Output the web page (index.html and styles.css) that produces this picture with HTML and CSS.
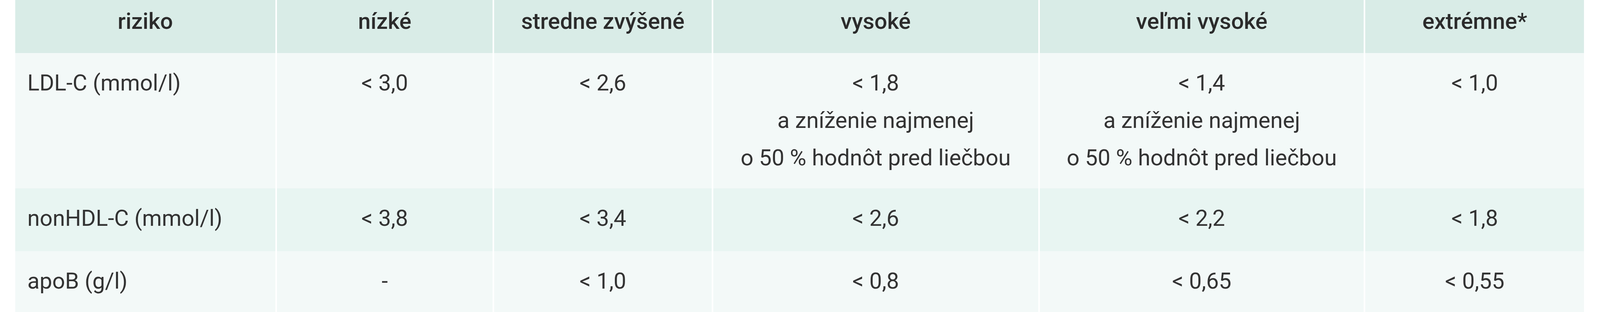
FILE: index.html
```html
<!DOCTYPE html>
<html lang="sk">
<head>
<meta charset="utf-8">
<title>Cieľové hodnoty</title>
<link rel="stylesheet" href="styles.css">
</head>
<body>
<table class="targets">
  <colgroup>
    <col class="c1"><col class="c2"><col class="c3"><col class="c4"><col class="c5"><col class="c6">
  </colgroup>
  <thead>
    <tr>
      <th>riziko</th>
      <th>nízké</th>
      <th>stredne zvýšené</th>
      <th>vysoké</th>
      <th>veľmi vysoké</th>
      <th>extrémne*</th>
    </tr>
  </thead>
  <tbody>
    <tr class="odd">
      <td class="label">LDL-C (mmol/l)</td>
      <td>&lt; 3,0</td>
      <td>&lt; 2,6</td>
      <td>&lt; 1,8<br>a zníženie najmenej<br>o 50 % hodnôt pred liečbou</td>
      <td>&lt; 1,4<br>a zníženie najmenej<br>o 50 % hodnôt pred liečbou</td>
      <td>&lt; 1,0</td>
    </tr>
    <tr class="even single">
      <td class="label">nonHDL-C (mmol/l)</td>
      <td>&lt; 3,8</td>
      <td>&lt; 3,4</td>
      <td>&lt; 2,6</td>
      <td>&lt; 2,2</td>
      <td>&lt; 1,8</td>
    </tr>
    <tr class="odd single">
      <td class="label">apoB (g/l)</td>
      <td>-</td>
      <td>&lt; 1,0</td>
      <td>&lt; 0,8</td>
      <td>&lt; 0,65</td>
      <td>&lt; 0,55</td>
    </tr>
  </tbody>
</table>
</body>
</html>
```
FILE: styles.css
```css
html, body {
  margin: 0;
  padding: 0;
  background: #ffffff;
  overflow: hidden;
}

body {
  font-family: Roboto, "Liberation Sans", Arial, sans-serif;
  font-size: 1.406vw;
  line-height: 96px;
  color: #333333;
}

.targets {
  margin-left: 0.95vw;
  width: 98.06vw;
  table-layout: fixed;
  border-collapse: separate;
  border-spacing: 0;
}

.c1 { width: 16.586%; }
.c2 { width: 13.835%; }
.c3 { width: 13.970%; }
.c4 { width: 20.810%; }
.c5 { width: 20.752%; }
.c6 { width: 14.047%; }

.targets th,
.targets td {
  vertical-align: top;
  text-align: center;
  white-space: nowrap;
}

.targets th + th,
.targets td + td {
  border-left: 4px solid #ffffff;
}

.targets th {
  background: #d9ece7;
  font-weight: 500;
  color: #2b2b2b;
  padding: 7px 0.2vw 33px;
}

.targets td {
  padding: 29px 0.2vw 30px;
}

.targets tr.single td {
  padding-bottom: 36px;
}

.targets tr.odd td {
  background: #f3f9f8;
}

.targets tr.even td {
  background: #e8f5f2;
}

.targets td.label {
  text-align: left;
  padding-left: 0.76vw;
}
```
